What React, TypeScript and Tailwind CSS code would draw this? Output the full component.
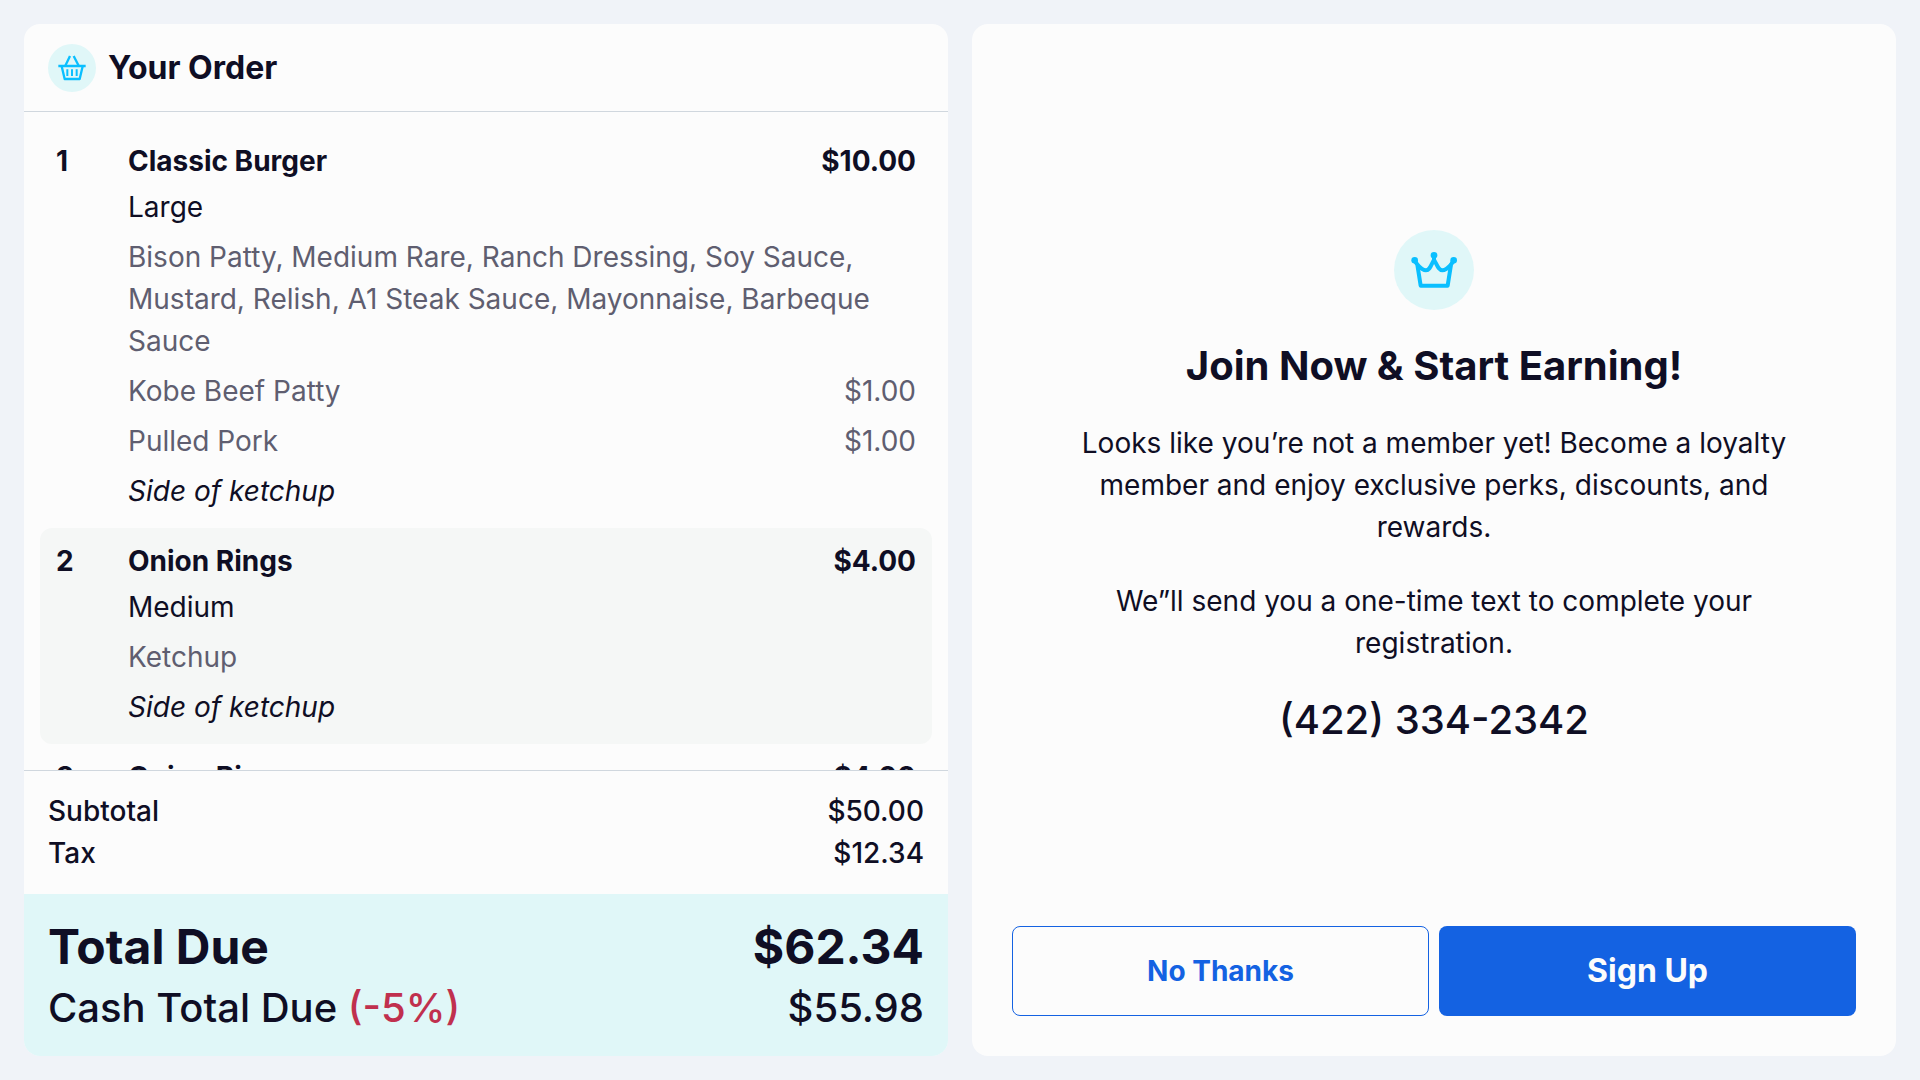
import React from 'react';

interface Modifier {
    label: string;
    price?: string;
}

interface OrderItem {
    qty: number;
    name: string;
    price: string;
    size: string;
    modifiers: Modifier[];
    note?: string;
}

const items: OrderItem[] = [
    {
        qty: 1,
        name: 'Classic Burger',
        price: '$10.00',
        size: 'Large',
        modifiers: [
            { label: 'Bison Patty, Medium Rare, Ranch Dressing, Soy Sauce, Mustard, Relish, A1 Steak Sauce, Mayonnaise, Barbeque Sauce' },
            { label: 'Kobe Beef Patty', price: '$1.00' },
            { label: 'Pulled Pork', price: '$1.00' },
        ],
        note: 'Side of ketchup',
    },
    {
        qty: 2,
        name: 'Onion Rings',
        price: '$4.00',
        size: 'Medium',
        modifiers: [{ label: 'Ketchup' }],
        note: 'Side of ketchup',
    },
    {
        qty: 3,
        name: 'Onion Rings',
        price: '$4.00',
        size: 'Medium',
        modifiers: [{ label: 'Ketchup' }],
        note: 'Side of ketchup',
    },
];

const BasketIcon = () => (
    <svg className="size-8" viewBox="168 156 96 96" fill="none" stroke="#0abfff" strokeWidth="7" aria-hidden="true">
        <path d="M210 168L196 197M221 168L236 197" />
        <path d="M175 198H257" />
        <path d="M185 199L194 237H239L248 199" strokeLinejoin="round" />
        <path d="M202 208V228M216 208V228M230 208V228" strokeWidth="6" />
    </svg>
);

const CrownIcon = () => (
    <svg className="size-12" viewBox="210 138 144 144" fill="none" stroke="#0abfff" strokeWidth="12" strokeLinejoin="round" aria-hidden="true">
        <path d="M224 181L232 194L242 257H323L333 194L341 181" />
        <path d="M232 194C240 203 248 211 258 211C270 211 273 194 282 179C291 194 295 211 307 211C317 211 325 203 333 194" />
        <path d="M282 165V184" />
        <g fill="#0abfff" stroke="none">
            <circle cx="224" cy="181" r="10" />
            <circle cx="282" cy="166" r="10" />
            <circle cx="341" cy="181" r="10" />
        </g>
    </svg>
);

const OrderRow = ({ item }: { item: OrderItem }) => (
    <li className="flex rounded-xl p-4 even:bg-[#f5f7f6]">
        <span className="w-[72px] flex-none font-bold leading-[34px]">{item.qty}</span>
        <div className="flex min-w-0 flex-1 flex-col gap-2">
            <div className="flex justify-between gap-4 font-bold leading-[34px]">
                <h2>{item.name}</h2>
                <span>{item.price}</span>
            </div>
            <p>{item.size}</p>
            {item.modifiers.map((mod) => (
                <div key={mod.label} className="flex justify-between gap-4 text-[#5f5e70]">
                    <span>{mod.label}</span>
                    {mod.price && <span>{mod.price}</span>}
                </div>
            ))}
            {item.note && <p className="italic">{item.note}</p>}
        </div>
    </li>
);

const OrderPanel = () => (
    <section className="flex min-h-0 flex-col overflow-hidden rounded-2xl bg-[#fcfcfc]">
        <header className="flex flex-none items-center gap-3 border-b border-[#d0d7de] px-6 pt-5 pb-[19px]">
            <span className="flex size-12 items-center justify-center rounded-full bg-[#e0f7f8]">
                <BasketIcon />
            </span>
            <h1 className="text-[32px] font-bold leading-[42px]">Your Order</h1>
        </header>

        <ul className="min-h-0 flex-1 overflow-y-auto p-4 [scrollbar-width:none]">
            {items.map((item) => (
                <OrderRow key={item.qty} item={item} />
            ))}
        </ul>

        <dl className="flex-none border-t border-[#d0d7de] px-6 pt-[19px] pb-5 font-medium">
            <div className="flex justify-between">
                <dt>Subtotal</dt>
                <dd>$50.00</dd>
            </div>
            <div className="flex justify-between">
                <dt>Tax</dt>
                <dd>$12.34</dd>
            </div>
        </dl>

        <dl className="flex flex-none flex-col gap-2 bg-[#e0f7f8] p-6">
            <div className="flex justify-between text-[48px] font-bold leading-[58px]">
                <dt>Total Due</dt>
                <dd>$62.34</dd>
            </div>
            <div className="flex justify-between text-[40px] font-medium leading-[48px]">
                <dt>
                    Cash Total Due <span className="text-[#c0304e]">(-5%)</span>
                </dt>
                <dd>$55.98</dd>
            </div>
        </dl>
    </section>
);

const LoyaltyPanel = () => (
    <section className="flex min-h-0 flex-col gap-4 rounded-2xl bg-[#fcfcfc] p-10">
        <div className="flex flex-1 flex-col items-center justify-center gap-8 text-center">
            <span className="flex size-20 items-center justify-center rounded-full bg-[#e0f7f8]">
                <CrownIcon />
            </span>
            <h2 className="text-[40px] font-bold leading-[48px]">Join Now &amp; Start Earning!</h2>
            <p className="max-w-[764px]">
                Looks like you’re not a member yet! Become a loyalty member and enjoy exclusive perks, discounts, and rewards.
            </p>
            <p className="max-w-[764px]">We”ll send you a one-time text to complete your registration.</p>
            <p className="text-[40px] font-medium leading-[48px]">(422) 334-2342</p>
        </div>

        <div className="grid flex-none grid-cols-2 gap-[10px]">
            <button type="button" className="h-[90px] rounded-lg border border-[#1462e2] font-bold text-[#1462e2]">
                No Thanks
            </button>
            <button type="button" className="h-[90px] rounded-lg bg-[#1462e2] text-[32px] font-bold text-[#fcfcfc]">
                Sign Up
            </button>
        </div>
    </section>
);

const App = () => (
    <main className="grid h-screen grid-cols-2 gap-6 bg-[#f0f3f8] p-6 font-['Inter',sans-serif] text-[28px] leading-[42px] text-[#0f0e24]">
        <OrderPanel />
        <LoyaltyPanel />
    </main>
);

export default App;
